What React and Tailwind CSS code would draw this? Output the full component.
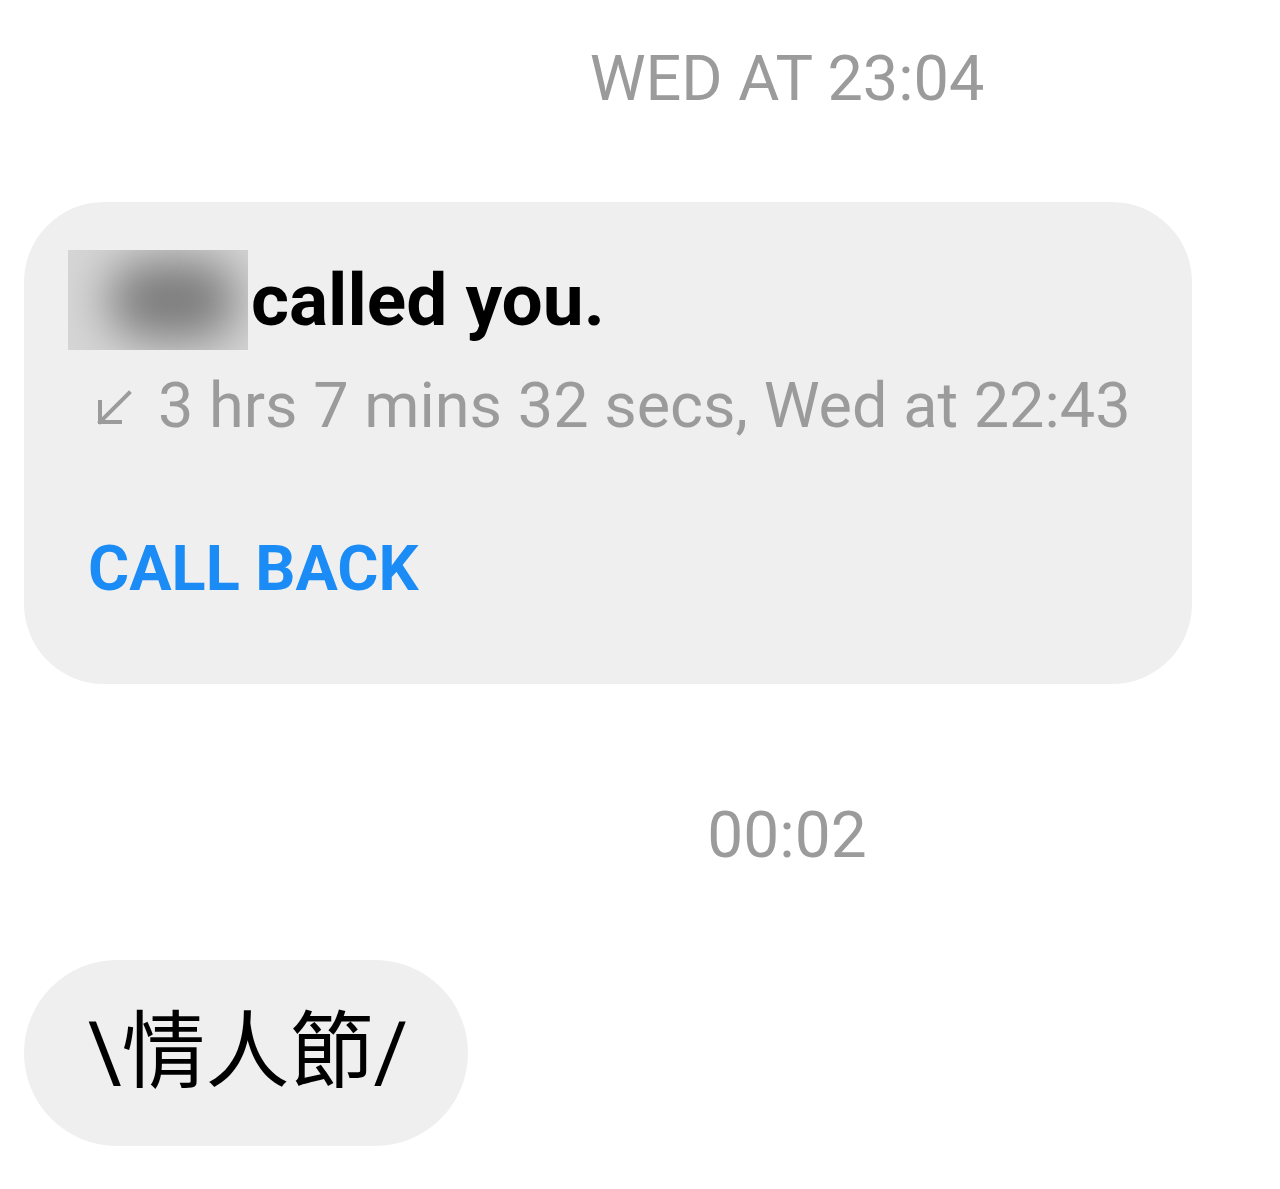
export default function App() {
  return (
    <div className="w-[1280px] h-[1189px] bg-white overflow-hidden" style={{ fontFamily: 'Roboto, "Noto Sans CJK TC", sans-serif' }}>
      <div className="pt-[42px] pl-[294px] text-center text-[63px] leading-[74px] text-[#9b9b9b]">WED AT 23:04</div>
      <div className="mt-[86px] ml-[24px] w-[1168px] h-[482px] rounded-[80px] bg-[#efefef] pt-[48px] pl-[44px]">
        <div className="flex items-center">
          <div className="relative w-[180px] h-[100px] overflow-hidden bg-[#d6d6d6]">
            <div className="absolute left-[40px] top-[10px] w-[130px] h-[80px] rounded-full bg-[#7a7a7a] blur-[24px]" />
          </div>
          <div className="ml-[3px] text-[73px] leading-[100px] font-bold text-black">called you.</div>
        </div>
        <div className="mt-[19px] flex items-center pl-[26px] text-[63px] leading-[73px] text-[#9b9b9b]">
          <svg width="40" height="40" viewBox="0 0 40 40" className="mr-[24px] mt-[6px]" fill="none" stroke="#9b9b9b" strokeWidth="4" strokeLinecap="square">
            <path d="M35 4 L6 33" />
            <path d="M6 13 L6 33 L26 33" />
          </svg>
          <span>3 hrs 7 mins 32 secs, Wed at 22:43</span>
        </div>
        <div className="mt-[90px] pl-[20px] text-[63px] leading-[74px] font-bold text-[#1b8cf6]">CALL BACK</div>
      </div>
      <div className="mt-[114px] pl-[294px] text-center text-[64px] leading-[75px] text-[#9b9b9b]">00:02</div>
      <div className="mt-[87px] ml-[24px] inline-flex h-[186px] items-center rounded-full bg-[#efefef] pl-[63px] pr-[60px] text-[84px] leading-none text-black">\情人節/</div>
    </div>
  );
}
